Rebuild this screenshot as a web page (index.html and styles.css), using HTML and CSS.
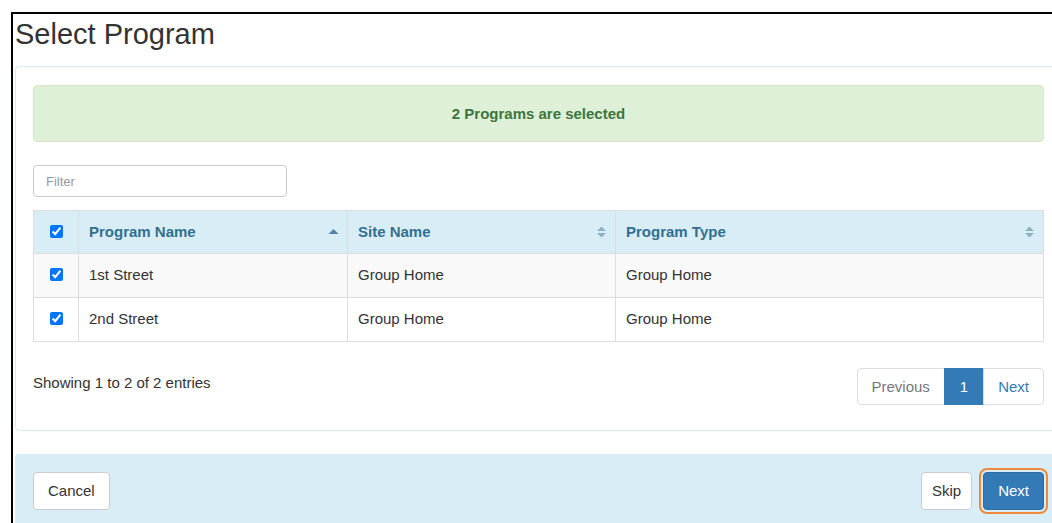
FILE: index.html
```html
<!DOCTYPE html>
<html lang="en">
<head>
<meta charset="utf-8">
<title>Select Program</title>
<link rel="stylesheet" href="styles.css">
</head>
<body>
<div class="frame">
  <h1 class="page-title">Select Program</h1>

  <section class="panel">
    <div class="alert">2 Programs are selected</div>

    <input class="filter" type="text" placeholder="Filter">

    <table class="grid">
      <colgroup>
        <col class="col-check">
        <col class="col-name">
        <col class="col-site">
        <col class="col-type">
      </colgroup>
      <thead>
        <tr>
          <th class="cell-check"><input type="checkbox" checked></th>
          <th>
            <div class="th-inner">
              <span>Program Name</span>
              <svg class="sort" width="11" height="14" viewBox="0 0 11 14"><path d="M0.5 9 L5.5 4 L10.5 9 Z" fill="#4f84a8"/></svg>
            </div>
          </th>
          <th>
            <div class="th-inner">
              <span>Site Name</span>
              <svg class="sort" width="11" height="14" viewBox="0 0 11 14"><path d="M1 6 L5.5 1.5 L10 6 Z M1 8 L5.5 12.5 L10 8 Z" fill="#8cb0c8"/></svg>
            </div>
          </th>
          <th>
            <div class="th-inner">
              <span>Program Type</span>
              <svg class="sort" width="11" height="14" viewBox="0 0 11 14"><path d="M1 6 L5.5 1.5 L10 6 Z M1 8 L5.5 12.5 L10 8 Z" fill="#8cb0c8"/></svg>
            </div>
          </th>
        </tr>
      </thead>
      <tbody>
        <tr class="striped">
          <td class="cell-check"><input type="checkbox" checked></td>
          <td>1st Street</td>
          <td>Group Home</td>
          <td>Group Home</td>
        </tr>
        <tr>
          <td class="cell-check"><input type="checkbox" checked></td>
          <td>2nd Street</td>
          <td>Group Home</td>
          <td>Group Home</td>
        </tr>
      </tbody>
    </table>

    <div class="table-footer">
      <div class="info">Showing 1 to 2 of 2 entries</div>
      <nav class="pager">
        <span class="page disabled">Previous</span>
        <span class="page active">1</span>
        <span class="page link">Next</span>
      </nav>
    </div>
  </section>

  <footer class="actions">
    <button class="btn btn-default">Cancel</button>
    <div class="actions-right">
      <button class="btn btn-default btn-compact">Skip</button>
      <button class="btn btn-primary is-focused">Next</button>
    </div>
  </footer>
</div>
</body>
</html>
```

FILE: styles.css
```css
html, body {
  margin: 0;
  padding: 0;
  background: #fff;
  overflow: hidden;
  height: 523px;
}

body {
  font-family: "Liberation Sans", Arial, Helvetica, sans-serif;
  font-size: 15px;
  line-height: 20px;
  color: #333;
}

.frame {
  margin: 12px 0 0 11px;
  border-top: 2px solid #000;
  border-left: 2px solid #000;
}

.page-title {
  margin: 0;
  padding-left: 2px;
  font-size: 29px;
  line-height: 40px;
  font-weight: 400;
  color: #333;
}

.panel {
  margin: 12px 0 0 2px;
  width: 1011px;
  border: 1px solid #d4ecf5;
  border-radius: 4px;
  padding: 18px 18px 25px 17px;
}

.alert {
  background: #dff0d8;
  border: 1px solid #d6e9c6;
  border-radius: 4px;
  color: #3c763d;
  font-weight: 700;
  text-align: center;
  padding: 17px 15px;
  line-height: 21px;
  width: 1011px;
  box-sizing: border-box;
}

.filter {
  display: block;
  margin-top: 23px;
  box-sizing: border-box;
  width: 254px;
  height: 32px;
  padding: 0 12px;
  border: 1px solid #ccc;
  border-radius: 4px;
  font-family: inherit;
  font-size: 13px;
  color: #555;
  outline: none;
}

.filter::placeholder {
  color: #999;
}

.grid {
  margin-top: 13px;
  width: 1011px;
  border-collapse: collapse;
  table-layout: fixed;
  border: 1px solid #ddd;
}

.col-check { width: 45px; }
.col-name { width: 269px; }
.col-site { width: 268px; }
.col-type { width: auto; }

.grid th,
.grid td {
  border: 1px solid #ddd;
  text-align: left;
  padding: 11px 10px 12px;
  vertical-align: middle;
}

.grid thead th {
  background: #d9edf7;
  color: #31708f;
  font-weight: 700;
  padding: 11px 10px 11px;
}

.th-inner {
  display: flex;
  align-items: center;
  justify-content: space-between;
}

.sort {
  display: block;
  margin-right: -2px;
}

.grid .cell-check {
  text-align: center;
  padding-left: 0;
  padding-right: 0;
}

.cell-check input {
  margin: 0;
  width: 13px;
  height: 13px;
  vertical-align: middle;
  position: relative;
  top: -2px;
}

.grid tbody tr.striped td {
  background: #f9f9f9;
}

.table-footer {
  display: flex;
  justify-content: space-between;
  align-items: flex-start;
  margin-top: 27px;
  width: 1011px;
}

.info {
  padding-top: 4px;
}

.pager {
  display: flex;
  margin-top: -1px;
}

.page {
  display: block;
  padding: 8px 14px 8px;
  border: 1px solid #ddd;
  margin-left: -1px;
  line-height: 19px;
  color: #337ab7;
  background: #fff;
}

.page.disabled {
  color: #777;
  border-radius: 4px 0 0 4px;
  padding-left: 13px;
  padding-right: 14px;
}

.page.active {
  background: #337ab7;
  border-color: #337ab7;
  color: #fff;
  padding-left: 15px;
  padding-right: 15px;
}

.page.link {
  border-radius: 0 4px 4px 0;
}

.actions {
  margin: 23px 0 0 2px;
  width: 1011px;
  background: #d9edf7;
  border-radius: 4px 0 0 0;
  padding: 18px 18px 14px 18px;
  display: flex;
  justify-content: space-between;
  align-items: flex-start;
}

.actions-right {
  display: flex;
  gap: 11px;
}

.btn {
  font-family: inherit;
  font-size: 15px;
  line-height: 20px;
  padding: 8px 14px 8px;
  border-radius: 4px;
  border: 1px solid #ccc;
  background: #fff;
  color: #333;
  cursor: pointer;
}

.btn-compact {
  padding-left: 10px;
  padding-right: 10px;
}

.btn-primary {
  background: #337ab7;
  border-color: #2e6da4;
  color: #fff;
  padding-left: 14px;
  padding-right: 14px;
}

.is-focused {
  outline: 2px solid #ef8a3a;
  outline-offset: 2px;
}
```
